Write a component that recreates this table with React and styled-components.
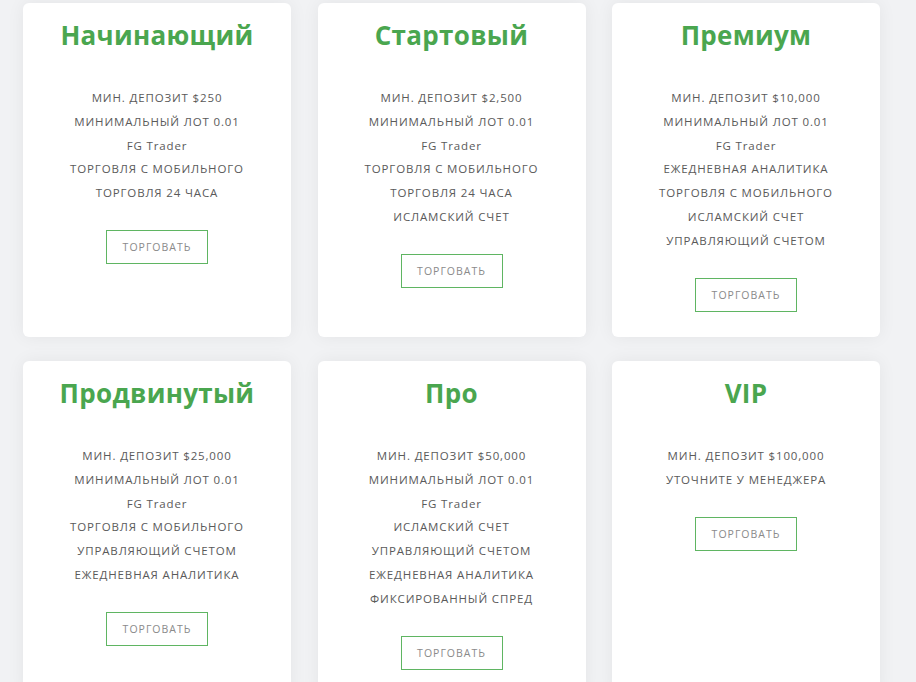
import styled, { createGlobalStyle } from "styled-components";

const GlobalStyle = createGlobalStyle`
  body {
    margin: 0;
    background: #f1f2f4;
    font-family: "Open Sans", "Liberation Sans", sans-serif;
  }
`;

const plans = [
  {
    title: "Начинающий",
    items: [
      "МИН. ДЕПОЗИТ $250",
      "МИНИМАЛЬНЫЙ ЛОТ 0.01",
      "FG Trader",
      "ТОРГОВЛЯ С МОБИЛЬНОГО",
      "ТОРГОВЛЯ 24 ЧАСА",
    ],
  },
  {
    title: "Стартовый",
    items: [
      "МИН. ДЕПОЗИТ $2,500",
      "МИНИМАЛЬНЫЙ ЛОТ 0.01",
      "FG Trader",
      "ТОРГОВЛЯ С МОБИЛЬНОГО",
      "ТОРГОВЛЯ 24 ЧАСА",
      "ИСЛАМСКИЙ СЧЕТ",
    ],
  },
  {
    title: "Премиум",
    items: [
      "МИН. ДЕПОЗИТ $10,000",
      "МИНИМАЛЬНЫЙ ЛОТ 0.01",
      "FG Trader",
      "ЕЖЕДНЕВНАЯ АНАЛИТИКА",
      "ТОРГОВЛЯ С МОБИЛЬНОГО",
      "ИСЛАМСКИЙ СЧЕТ",
      "УПРАВЛЯЮЩИЙ СЧЕТОМ",
    ],
  },
  {
    title: "Продвинутый",
    items: [
      "МИН. ДЕПОЗИТ $25,000",
      "МИНИМАЛЬНЫЙ ЛОТ 0.01",
      "FG Trader",
      "ТОРГОВЛЯ С МОБИЛЬНОГО",
      "УПРАВЛЯЮЩИЙ СЧЕТОМ",
      "ЕЖЕДНЕВНАЯ АНАЛИТИКА",
    ],
  },
  {
    title: "Про",
    items: [
      "МИН. ДЕПОЗИТ $50,000",
      "МИНИМАЛЬНЫЙ ЛОТ 0.01",
      "FG Trader",
      "ИСЛАМСКИЙ СЧЕТ",
      "УПРАВЛЯЮЩИЙ СЧЕТОМ",
      "ЕЖЕДНЕВНАЯ АНАЛИТИКА",
      "ФИКСИРОВАННЫЙ СПРЕД",
    ],
  },
  {
    title: "VIP",
    items: ["МИН. ДЕПОЗИТ $100,000", "УТОЧНИТЕ У МЕНЕДЖЕРА"],
  },
];

const Grid = styled.div`
  display: grid;
  grid-template-columns: repeat(3, 268px);
  grid-auto-rows: 334px;
  column-gap: 26.5px;
  row-gap: 24px;
  padding: 3px 0 0 23px;
`;

const Card = styled.div`
  background: #fff;
  border-radius: 6px;
  box-shadow: 0 0 18px rgba(0, 0, 0, 0.06);
  display: flex;
  flex-direction: column;
  align-items: center;
  padding-top: 15px;
  box-sizing: border-box;
`;

const Title = styled.h3`
  margin: 0;
  font-size: 26px;
  line-height: 34px;
  font-weight: 700;
  color: #4aa64f;
  letter-spacing: 0.3px;
`;

const List = styled.ul`
  list-style: none;
  margin: 34px 0 0;
  padding: 0;
  text-align: center;
`;

const Item = styled.li`
  font-size: 11.5px;
  line-height: 23.8px;
  color: #5a5a5a;
  letter-spacing: 0.85px;
`;

const TradeButton = styled.a`
  margin-top: 25px;
  width: 102px;
  height: 34px;
  box-sizing: border-box;
  border: 1px solid #5fb562;
  display: flex;
  align-items: center;
  justify-content: center;
  font-size: 10.5px;
  color: #8a8a8a;
  letter-spacing: 1px;
  text-decoration: none;
`;

export default function App() {
  return (
    <>
      <GlobalStyle />
      <Grid>
        {plans.map((plan) => (
          <Card key={plan.title}>
            <Title>{plan.title}</Title>
            <List>
              {plan.items.map((item) => (
                <Item key={item}>{item}</Item>
              ))}
            </List>
            <TradeButton href="#">ТОРГОВАТЬ</TradeButton>
          </Card>
        ))}
      </Grid>
    </>
  );
}
